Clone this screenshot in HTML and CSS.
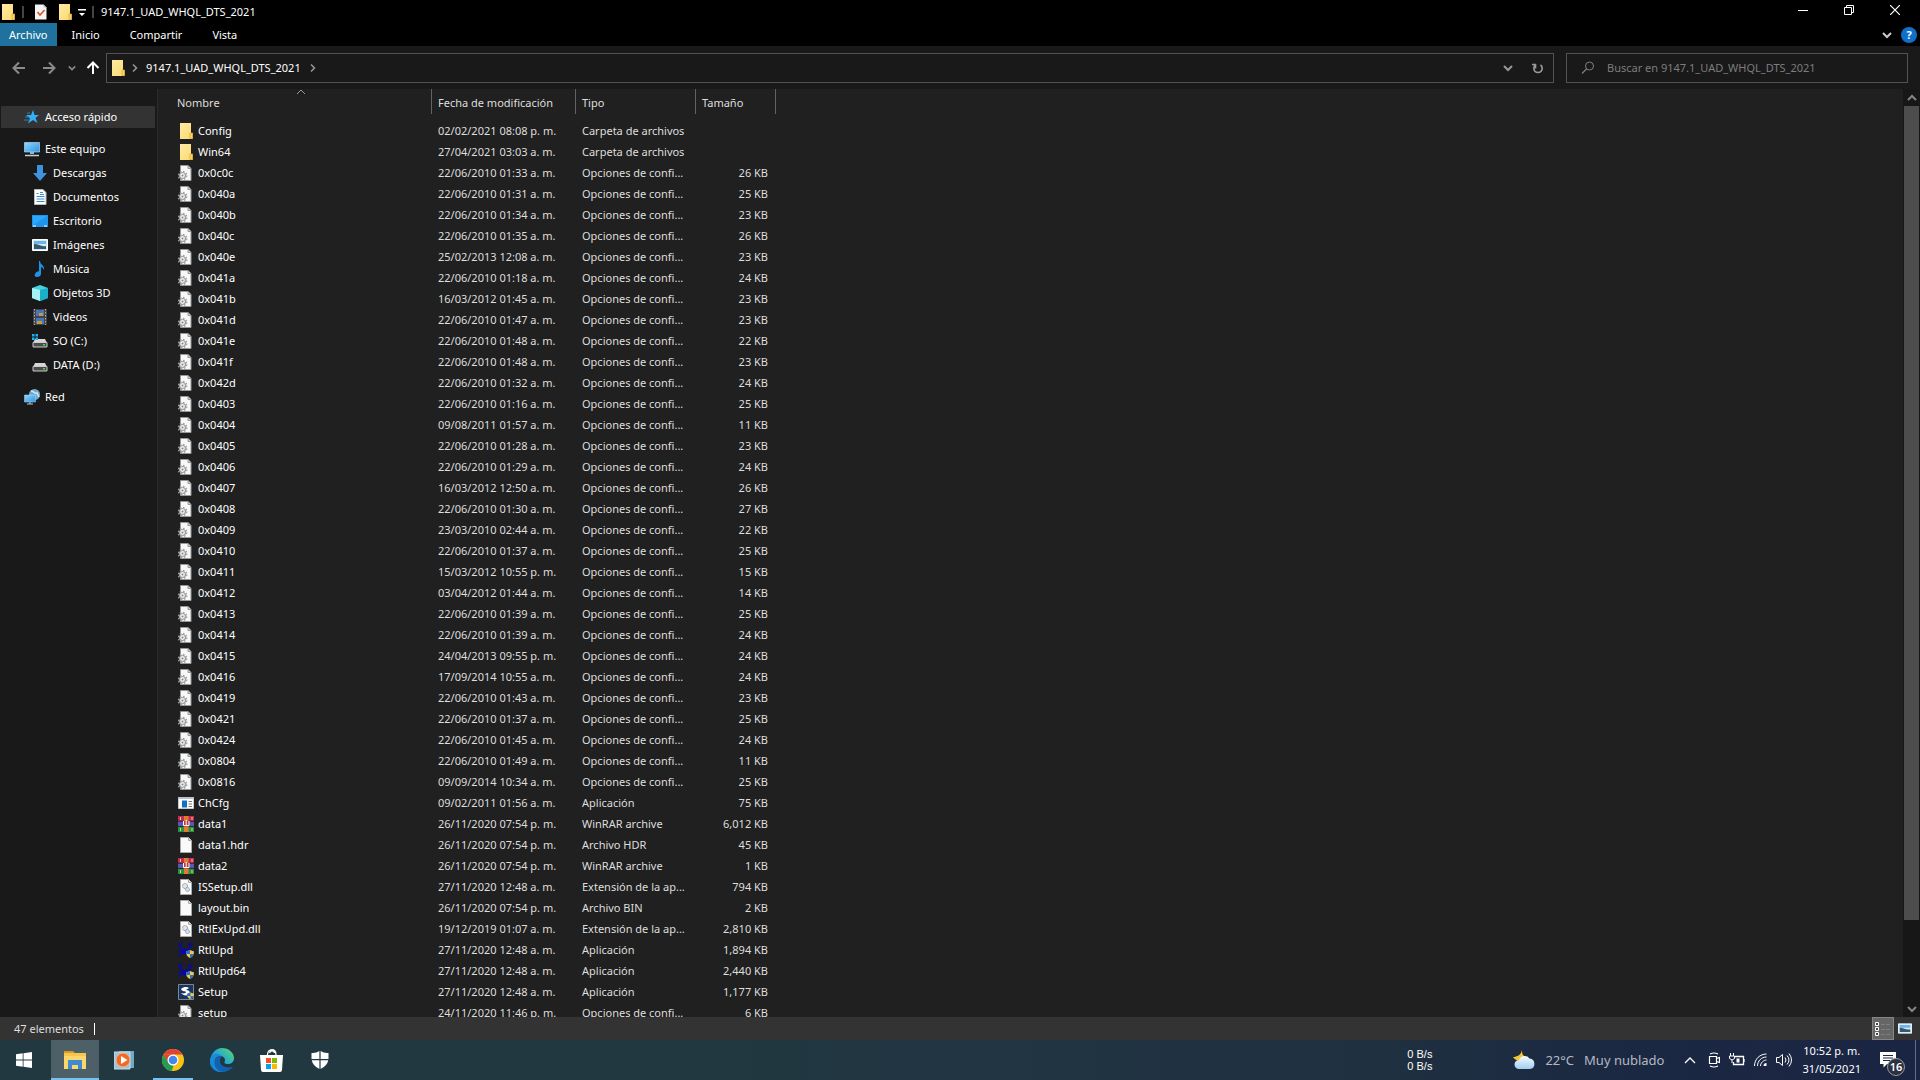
FILE: index.html
```html
<!DOCTYPE html>
<html lang="es">
<head>
<meta charset="utf-8">
<title>9147.1_UAD_WHQL_DTS_2021</title>
<link rel="stylesheet" href="styles.css">
</head>
<body>
<svg class="sprite" aria-hidden="true">
  <defs>
    <linearGradient id="g-edge" x1="0" y1="1" x2="1" y2="0"><stop offset="0" stop-color="#0c59a4"/><stop offset=".45" stop-color="#1b9de2"/><stop offset="1" stop-color="#5fdc6a"/></linearGradient>
    <linearGradient id="g-screen" x1="0" y1="0" x2="1" y2="1"><stop offset="0" stop-color="#8fd6ff"/><stop offset="1" stop-color="#2b95e0"/></linearGradient>
    <linearGradient id="g-folder" x1="0" y1="0" x2="1" y2="1"><stop offset="0" stop-color="#ffeba6"/><stop offset="1" stop-color="#fbd96b"/></linearGradient>
    <linearGradient id="g-cloud" x1="0" y1="0" x2="0" y2="1"><stop offset="0" stop-color="#f4fbff"/><stop offset="1" stop-color="#a3cdf0"/></linearGradient>
  </defs>
  <symbol id="folder" viewBox="0 0 16 16"><path d="M2 0h11v10h1.500v6H2z" fill="url(#g-folder)"/><path d="M12 15.500v-5.500h2.500v5.500z" fill="#f8d568" stroke="#d9ab3c" stroke-width=".8"/></symbol>
  <symbol id="ini" viewBox="1 0 16 16"><path d="M3.500.500H11L14 3.500v12H3.500z" fill="#f8f8f8" stroke="#999"/><path d="M11 .500v3h3" fill="#ccc" stroke="#999"/><circle cx="5.500" cy="10.500" r="3" fill="#f0f0f0" stroke="#9a9fa2" stroke-width="1.200"/><circle cx="5.500" cy="10.500" r="4.200" fill="none" stroke="#9a9fa2" stroke-width="1.400" stroke-dasharray="1.500 1.800"/><circle cx="5.500" cy="10.500" r="1" fill="#888"/></symbol>
  <symbol id="file" viewBox="0 0 16 16"><path d="M2.500.500h8L13.500 3.500v12h-11z" fill="#fafafa" stroke="#aaa"/><path d="M10.500.500v3h3" fill="#ddd" stroke="#aaa"/></symbol>
  <symbol id="dll" viewBox="0 0 16 16"><use href="#file"/><circle cx="7" cy="7" r="2.500" fill="#e1e5e8" stroke="#7d8a93" stroke-dasharray="1.200 .6"/><circle cx="9.500" cy="10.500" r="2" fill="#d5e1eb" stroke="#7490a7" stroke-dasharray="1.200 .6"/></symbol>
  <symbol id="app" viewBox="0 0 16 16"><path d="M.500 2.500h15v11H.500z" fill="#fff" stroke="#c6cbd0"/><path d="M0 2h16v2H0z" fill="#b9c2c9"/><path d="M4 5.500h5v7H4z" fill="#1271c4"/><path d="M10.500 6.500H14m-3.500 2.500H14m-3.500 2.500H14" stroke="#777"/></symbol>
  <symbol id="rar" viewBox="0 0 16 16"><path d="M0 0h16v5H0z" fill="#c8285a"/><path d="M0 5.500h16v4.500H0z" fill="#5a58b4"/><path d="M0 10.500h16V16H0z" fill="#259147"/><path d="M0 5.200h16M0 10.400h16" stroke="#2a2434" stroke-width=".8"/><path d="M2.500 1v3M2.500 12v3M14 1v3M14 12v3" stroke="#f0d060"/><path d="M6 0h4.500v16H6z" fill="#e07c2c"/><path d="M5 5h6.500v5.500H5z" fill="#b03c44"/><path d="M5.500 5v4.500h5.500V5M8.200 4v5" fill="none" stroke="#fff"/></symbol>
  <symbol id="shield" viewBox="0 0 8 8"><path d="M4 0l4 1.500C8 5 6.500 7 4 8 1.500 7 0 5 0 1.500z" fill="#f1c94b"/><path d="M4 0L0 1.500 .3 4H4zM4 4h3.700C7 6 6 7.200 4 8z" fill="#2b6fc6"/></symbol>
  <symbol id="crab" viewBox="0 0 16 16"><path d="M1 1l1 4 3 3M14 0l-1 4-3 4M4 0l-1 4M11 1v3M0 9l4 1-3 4M15 8l-4 2" stroke="#0a0a9c" stroke-width="1.600" fill="none"/><path d="M3 8c2-2 7-2 9 0l-1 4H4z" fill="#0808a8"/><use href="#shield" x="8" y="8" width="8" height="8"/></symbol>
  <symbol id="setup" viewBox="0 0 16 16"><path d="M.500.500h15v15H.500z" fill="#1a3560" stroke="#77879b"/><path d="M3 5c3-3 7-2 8-1L8 6c4 0 5 3 2 5-3 1-5 0-7-2 3 1 5 0 5-1S4 8 3 5z" fill="#fff"/><use href="#shield" x="9" y="8" width="7" height="8"/></symbol>
  <symbol id="drive" viewBox="0 0 16 16"><path d="M3 6h10l2 4H1z" fill="#d6d6d6"/><path d="M1 9.500h14V14H1z" fill="#4c4c4c" stroke="#c9c9c9"/><path d="M11 11h2v1.500h-2z" fill="#37e04e"/></symbol>
  <symbol id="picture" viewBox="0 0 16 12"><path d="M.500.500h15v11H.500z" fill="#d4ebfa" stroke="#fff"/><path d="M2 2h12v3H2z" fill="#6db5e9"/><path d="M2 5c5 0 7 3 12 2v3H2z" fill="#33596c"/></symbol>
  <symbol id="down" viewBox="0 0 10 10"><path d="M1 3l4 4 4-4" fill="none" stroke="currentColor" stroke-width="2"/></symbol>
  <symbol id="right" viewBox="0 0 6 10"><path d="M1 1.500L4.500 5 1 8.500" fill="none" stroke="currentColor" stroke-width="1.500"/></symbol>
  <symbol id="arrow" viewBox="0 0 14 14"><path d="M13 7H1.500M7 1.500L1.500 7 7 12.500" fill="none" stroke="currentColor" stroke-width="2"/></symbol>
</svg>

<header class="titlebar">
  <svg class="i16"><use href="#folder"/></svg>
  <span class="bar"></span>
  <button class="qa" aria-label="Propiedades"><svg class="i16" viewBox="0 0 16 16"><path d="M2 .500h8.500L13.500 3.500v12H2z" fill="#f4f4f4"/><path d="M10.500.500v3h3" fill="#bbb"/><path d="M4.500 8l2.500 3 4.500-5" fill="none" stroke="#d9552a" stroke-width="1.600"/></svg></button>
  <button class="qa" aria-label="Nueva carpeta"><svg class="i16"><use href="#folder"/></svg></button>
  <button class="qa more" aria-label="Personalizar barra"><svg width="8" height="8" viewBox="0 0 8 8"><path d="M0 0h8v1.500H0zM1 4h6L4 7z" fill="#fff"/></svg></button>
  <span class="bar"></span>
  <h1 class="title">9147.1_UAD_WHQL_DTS_2021</h1>
  <div class="winctl">
    <button aria-label="Minimizar"><svg width="10" height="10"><path d="M0 5.500h10" stroke="#fff"/></svg></button>
    <button aria-label="Restaurar"><svg width="10" height="10"><path d="M.500 2.500h7v7h-7zM2.500 2V.500h7v7H8" fill="none" stroke="#fff"/></svg></button>
    <button aria-label="Cerrar"><svg width="10" height="10"><path d="M0 0l10 10M10 0L0 10" stroke="#fff" stroke-width="1.200"/></svg></button>
  </div>
</header>

<nav class="tabs">
  <button class="tab active">Archivo</button><button class="tab">Inicio</button><button class="tab">Compartir</button><button class="tab">Vista</button>
  <div class="ribbon-end">
    <button aria-label="Expandir cinta"><svg class="i10"><use href="#down"/></svg></button>
    <button class="help" aria-label="Ayuda">?</button>
  </div>
</nav>

<div class="address-row">
  <div class="history">
    <button class="dim" aria-label="Atrás"><svg class="i14"><use href="#arrow"/></svg></button>
    <button class="dim fwd" aria-label="Adelante"><svg class="i14 flip"><use href="#arrow"/></svg></button>
    <button class="dim recent" aria-label="Recientes"><svg class="i8"><use href="#down"/></svg></button>
    <button aria-label="Subir"><svg class="i14 up"><use href="#arrow"/></svg></button>
  </div>
  <div class="address">
    <svg class="i16"><use href="#folder"/></svg>
    <svg class="crumb"><use href="#right"/></svg>
    <a class="path" href="#">9147.1_UAD_WHQL_DTS_2021</a>
    <svg class="crumb"><use href="#right"/></svg>
    <button class="drop" aria-label="Ubicaciones anteriores"><svg class="i10"><use href="#down"/></svg></button>
    <button class="refresh" aria-label="Actualizar"><svg width="12" height="12" viewBox="0 0 12 12"><path d="M8.500 2.500a4.200 4.200 0 1 1-5 0M3.500 6V2H0" transform="translate(0 .5)" fill="none" stroke="currentColor" stroke-width="1.600"/></svg></button>
  </div>
  <label class="search">
    <svg width="14" height="14" viewBox="0 0 14 14"><circle cx="8.500" cy="5" r="4" fill="none" stroke="currentColor"/><path d="M5.500 8L1 12.500" stroke="currentColor" stroke-width="1.300"/></svg>
    <input type="text" aria-label="Buscar" placeholder="Buscar en 9147.1_UAD_WHQL_DTS_2021">
  </label>
</div>

<main class="body">
  <nav class="side">
    <a class="root sel" href="#"><svg class="i16" viewBox="0 0 16 16"><path d="M9 1l1.500 5H15l-3.500 3 2 5L9 11l-5 3.500 2-5L2 6h5z" fill="#35aef5"/><path d="M1 8h4M0 11h5M3 4h3" stroke="#2583bd"/></svg>Acceso rápido</a>
    <a class="root gap" href="#"><svg class="i16" viewBox="0 0 16 16"><path d="M.500 1.500h15v9.500H.500z" fill="url(#g-screen)" stroke="#bfe6ff" stroke-width=".6"/><path d="M6 11h4v2H6z" fill="#9fb3bf"/><path d="M1 14.500h14" stroke="#c5d0d8" stroke-width="1.500"/></svg>Este equipo</a>
    <a href="#"><svg class="i16" viewBox="0 0 16 16"><path d="M5 0h6v8h4l-7 8-7-8h4z" fill="#3e93e0"/></svg>Descargas</a>
    <a href="#"><svg class="i16" viewBox="0 0 16 16"><path d="M2.500.500h8.500l3 3v12H2.500z" fill="#fff" stroke="#bbb"/><path d="M4.500 4.500h2m-2 3h8m-8 2.500h8m-8 2.500h8M8 3.500h3M8 5.500h4" stroke="#3b8bd0"/></svg>Documentos</a>
    <a href="#"><svg class="i16" viewBox="0 0 16 16"><path d="M0 2h16v12H0z" fill="#1e95ea"/><path d="M1 3h14L1 12z" fill="#2ba8fb"/><path d="M1 13h3m8 0h3" stroke="#fff"/></svg>Escritorio</a>
    <a href="#"><svg class="i16" viewBox="0 0 16 12"><use href="#picture"/></svg>Imágenes</a>
    <a href="#"><svg class="i16" viewBox="0 0 16 16"><path d="M8 0c0 4 5 4 4 9-1-2-2-3-3-3v7c0 2-2 3-4 3s-3-1-2-3 3-3 4-2.500V0z" fill="#1e93e8"/></svg>Música</a>
    <a href="#"><svg class="i16" viewBox="0 0 16 16"><path d="M0 3l8-3 8 3v10l-8 3-8-3z" fill="#43d3df"/><path d="M0 3l8 2v11l-8-3z" fill="#a6f1f4"/><path d="M8 5l8-2v10l-8 3z" fill="#1bb0c7"/></svg>Objetos 3D</a>
    <a href="#"><svg class="i16" viewBox="0 0 16 16"><path d="M1 0h14v16H1z" fill="#444"/><path d="M2.500 0v16m11-16v16" stroke="#aaa" stroke-dasharray="1.500 1.500"/><path d="M4 1h8v6H4zM4 9h8v6H4z" fill="#4676c3"/><path d="M7 4h4v3H7zM5 12h5v3H5z" fill="#c69b35"/></svg>Videos</a>
    <a href="#"><svg class="i16" viewBox="0 0 16 16"><use href="#drive"/><path d="M0 1h2.500v2.500H0zM3.500 1H6v2.500H3.500zM0 4.500h2.500V7H0zM3.500 4.500H6V7H3.500z" fill="#20b3ef"/></svg>SO (C:)</a>
    <a href="#"><svg class="i16"><use href="#drive"/></svg>DATA (D:)</a>
    <a class="root gap" href="#"><svg class="i16" viewBox="0 0 16 16"><circle cx="10.500" cy="5.500" r="5.500" fill="#73a9c9"/><path d="M7 2c3 0 3 3 6 2l2 4" stroke="#d2ebf7" fill="none" stroke-width="1.500"/><path d="M.500 6h11v7H.500z" fill="url(#g-screen)" stroke="#a6dcff" stroke-width=".5"/><path d="M3 15h6M6 13v2" stroke="#bccad3"/></svg>Red</a>
  </nav>
  <div class="files">
    <table>
      <colgroup><col class="c-name"><col class="c-date"><col class="c-type"><col class="c-size"></colgroup>
      <thead><tr><th class="sorted">Nombre<svg width="10" height="6"><path d="M1 5l4-4 4 4" fill="none" stroke="#999"/></svg></th><th>Fecha de modificación</th><th>Tipo</th><th>Tamaño</th></tr></thead>
      <tbody>
        <tr><td><svg><use href="#folder"/></svg>Config</td><td>02/02/2021 08:08 p. m.</td><td>Carpeta de archivos</td><td></td></tr>
        <tr><td><svg><use href="#folder"/></svg>Win64</td><td>27/04/2021 03:03 a. m.</td><td>Carpeta de archivos</td><td></td></tr>
        <tr><td><svg><use href="#ini"/></svg>0x0c0c</td><td>22/06/2010 01:33 a. m.</td><td>Opciones de confi...</td><td>26 KB</td></tr>
        <tr><td><svg><use href="#ini"/></svg>0x040a</td><td>22/06/2010 01:31 a. m.</td><td>Opciones de confi...</td><td>25 KB</td></tr>
        <tr><td><svg><use href="#ini"/></svg>0x040b</td><td>22/06/2010 01:34 a. m.</td><td>Opciones de confi...</td><td>23 KB</td></tr>
        <tr><td><svg><use href="#ini"/></svg>0x040c</td><td>22/06/2010 01:35 a. m.</td><td>Opciones de confi...</td><td>26 KB</td></tr>
        <tr><td><svg><use href="#ini"/></svg>0x040e</td><td>25/02/2013 12:08 a. m.</td><td>Opciones de confi...</td><td>23 KB</td></tr>
        <tr><td><svg><use href="#ini"/></svg>0x041a</td><td>22/06/2010 01:18 a. m.</td><td>Opciones de confi...</td><td>24 KB</td></tr>
        <tr><td><svg><use href="#ini"/></svg>0x041b</td><td>16/03/2012 01:45 a. m.</td><td>Opciones de confi...</td><td>23 KB</td></tr>
        <tr><td><svg><use href="#ini"/></svg>0x041d</td><td>22/06/2010 01:47 a. m.</td><td>Opciones de confi...</td><td>23 KB</td></tr>
        <tr><td><svg><use href="#ini"/></svg>0x041e</td><td>22/06/2010 01:48 a. m.</td><td>Opciones de confi...</td><td>22 KB</td></tr>
        <tr><td><svg><use href="#ini"/></svg>0x041f</td><td>22/06/2010 01:48 a. m.</td><td>Opciones de confi...</td><td>23 KB</td></tr>
        <tr><td><svg><use href="#ini"/></svg>0x042d</td><td>22/06/2010 01:32 a. m.</td><td>Opciones de confi...</td><td>24 KB</td></tr>
        <tr><td><svg><use href="#ini"/></svg>0x0403</td><td>22/06/2010 01:16 a. m.</td><td>Opciones de confi...</td><td>25 KB</td></tr>
        <tr><td><svg><use href="#ini"/></svg>0x0404</td><td>09/08/2011 01:57 a. m.</td><td>Opciones de confi...</td><td>11 KB</td></tr>
        <tr><td><svg><use href="#ini"/></svg>0x0405</td><td>22/06/2010 01:28 a. m.</td><td>Opciones de confi...</td><td>23 KB</td></tr>
        <tr><td><svg><use href="#ini"/></svg>0x0406</td><td>22/06/2010 01:29 a. m.</td><td>Opciones de confi...</td><td>24 KB</td></tr>
        <tr><td><svg><use href="#ini"/></svg>0x0407</td><td>16/03/2012 12:50 a. m.</td><td>Opciones de confi...</td><td>26 KB</td></tr>
        <tr><td><svg><use href="#ini"/></svg>0x0408</td><td>22/06/2010 01:30 a. m.</td><td>Opciones de confi...</td><td>27 KB</td></tr>
        <tr><td><svg><use href="#ini"/></svg>0x0409</td><td>23/03/2010 02:44 a. m.</td><td>Opciones de confi...</td><td>22 KB</td></tr>
        <tr><td><svg><use href="#ini"/></svg>0x0410</td><td>22/06/2010 01:37 a. m.</td><td>Opciones de confi...</td><td>25 KB</td></tr>
        <tr><td><svg><use href="#ini"/></svg>0x0411</td><td>15/03/2012 10:55 p. m.</td><td>Opciones de confi...</td><td>15 KB</td></tr>
        <tr><td><svg><use href="#ini"/></svg>0x0412</td><td>03/04/2012 01:44 a. m.</td><td>Opciones de confi...</td><td>14 KB</td></tr>
        <tr><td><svg><use href="#ini"/></svg>0x0413</td><td>22/06/2010 01:39 a. m.</td><td>Opciones de confi...</td><td>25 KB</td></tr>
        <tr><td><svg><use href="#ini"/></svg>0x0414</td><td>22/06/2010 01:39 a. m.</td><td>Opciones de confi...</td><td>24 KB</td></tr>
        <tr><td><svg><use href="#ini"/></svg>0x0415</td><td>24/04/2013 09:55 p. m.</td><td>Opciones de confi...</td><td>24 KB</td></tr>
        <tr><td><svg><use href="#ini"/></svg>0x0416</td><td>17/09/2014 10:55 a. m.</td><td>Opciones de confi...</td><td>24 KB</td></tr>
        <tr><td><svg><use href="#ini"/></svg>0x0419</td><td>22/06/2010 01:43 a. m.</td><td>Opciones de confi...</td><td>23 KB</td></tr>
        <tr><td><svg><use href="#ini"/></svg>0x0421</td><td>22/06/2010 01:37 a. m.</td><td>Opciones de confi...</td><td>25 KB</td></tr>
        <tr><td><svg><use href="#ini"/></svg>0x0424</td><td>22/06/2010 01:45 a. m.</td><td>Opciones de confi...</td><td>24 KB</td></tr>
        <tr><td><svg><use href="#ini"/></svg>0x0804</td><td>22/06/2010 01:49 a. m.</td><td>Opciones de confi...</td><td>11 KB</td></tr>
        <tr><td><svg><use href="#ini"/></svg>0x0816</td><td>09/09/2014 10:34 a. m.</td><td>Opciones de confi...</td><td>25 KB</td></tr>
        <tr><td><svg><use href="#app"/></svg>ChCfg</td><td>09/02/2011 01:56 a. m.</td><td>Aplicación</td><td>75 KB</td></tr>
        <tr><td><svg><use href="#rar"/></svg>data1</td><td>26/11/2020 07:54 p. m.</td><td>WinRAR archive</td><td>6,012 KB</td></tr>
        <tr><td><svg><use href="#file"/></svg>data1.hdr</td><td>26/11/2020 07:54 p. m.</td><td>Archivo HDR</td><td>45 KB</td></tr>
        <tr><td><svg><use href="#rar"/></svg>data2</td><td>26/11/2020 07:54 p. m.</td><td>WinRAR archive</td><td>1 KB</td></tr>
        <tr><td><svg><use href="#dll"/></svg>ISSetup.dll</td><td>27/11/2020 12:48 a. m.</td><td>Extensión de la ap...</td><td>794 KB</td></tr>
        <tr><td><svg><use href="#file"/></svg>layout.bin</td><td>26/11/2020 07:54 p. m.</td><td>Archivo BIN</td><td>2 KB</td></tr>
        <tr><td><svg><use href="#dll"/></svg>RtlExUpd.dll</td><td>19/12/2019 01:07 a. m.</td><td>Extensión de la ap...</td><td>2,810 KB</td></tr>
        <tr><td><svg><use href="#crab"/></svg>RtlUpd</td><td>27/11/2020 12:48 a. m.</td><td>Aplicación</td><td>1,894 KB</td></tr>
        <tr><td><svg><use href="#crab"/></svg>RtlUpd64</td><td>27/11/2020 12:48 a. m.</td><td>Aplicación</td><td>2,440 KB</td></tr>
        <tr><td><svg><use href="#setup"/></svg>Setup</td><td>27/11/2020 12:48 a. m.</td><td>Aplicación</td><td>1,177 KB</td></tr>
        <tr><td><svg><use href="#ini"/></svg>setup</td><td>24/11/2020 11:46 p. m.</td><td>Opciones de confi...</td><td>6 KB</td></tr>
      </tbody>
    </table>
  </div>
  <div class="scroll">
    <button aria-label="Subir lista"><svg class="i10 turn"><use href="#down"/></svg></button>
    <div class="track"><div class="thumb"></div></div>
    <button aria-label="Bajar lista"><svg class="i10"><use href="#down"/></svg></button>
  </div>
</main>

<div class="status">
  <span class="count">47 elementos</span>
  <button class="view on" aria-label="Detalles"><svg width="16" height="14" viewBox="0 0 16 14"><path d="M.500.500h3v3h-3zM.500 5.500h3v3h-3zM.500 10.500h3v3h-3z" fill="#444" stroke="#fff"/><path d="M6 2.500h10M6 7.500h10M6 12.500h10" stroke="#7c807c" stroke-dasharray="4 1"/></svg></button>
  <button class="view" aria-label="Iconos grandes"><svg width="14" height="11" viewBox="0 0 16 12"><use href="#picture"/></svg></button>
</div>

<footer class="taskbar">
  <div class="apps">
    <button class="start" aria-label="Inicio"><svg width="16" height="16" viewBox="0 0 16 16"><path d="M0 2.300l6.700-1v6.200H0zM7.500 1.200L16 0v7.500H7.500zM0 8.400h6.700v6.300L0 13.800zM7.500 8.400H16V16l-8.500-1.200z" fill="#fff"/></svg></button>
    <button class="current" aria-label="Explorador"><svg width="22" height="18" viewBox="0 0 22 18"><path d="M0 0h9l2 2H0z" fill="#d89b1e"/><path d="M0 2h22v16H0z" fill="#fbd66c"/><path d="M0 2h22v3H0z" fill="#f5c64f"/><path d="M4 9h14v9h-4v-4H8v4H4z" fill="#3b8cd0"/></svg></button>
    <button aria-label="Reproductor multimedia"><svg width="20" height="20" viewBox="0 0 20 20"><path d="M5 1h15v17H5z" fill="#6fa9c7"/><path d="M0 2h16v17H0z" fill="#9cc6de" stroke="#c4dfed"/><circle cx="9" cy="10" r="7" fill="#ed6b25" stroke="#f9b98c"/><path d="M7 6l6.500 4L7 14z" fill="#fff"/></svg></button>
    <button class="running" aria-label="Chrome"><svg width="22" height="22" viewBox="0 0 22 22"><circle cx="11" cy="11" r="11" fill="#fbc116"/><path d="M1.500 5.500A11 11 0 0 1 20.500 5.500H11z" fill="#e04235"/><path d="M1.500 5.500L7 14l4.500 3-2 5A11 11 0 0 1 1.500 5.500z" fill="#259d50"/><path d="M1.500 5.500L6 13l5-7.500z" fill="#e04235"/><circle cx="11" cy="11" r="5.500" fill="#fff"/><circle cx="11" cy="11" r="4.300" fill="#4585ee"/></svg></button>
    <button aria-label="Edge"><svg width="24" height="24" viewBox="0 0 24 24"><path d="M0 12C1 5 6 0 12 0c7 0 12 5 12 10 0 4-3 6-6 6-3 0-4-1-3.500-2C16 11 14 8 10 8c-5 0-7 5-4 10 2 4 7 6 10 5-8 4-17-2-16-11z" fill="url(#g-edge)"/><path d="M10 8c-8 1-8 13 1 15.500 5 1.500 10-2 12-5-5 2-13 1-13-6 0-2 1-3.500 2-4z" fill="#1262b1"/><path d="M0 12c1-6 8-8 12-4-6-1-9 4-7 10 1 3 4 5 6 5.700C4 23.500-.500 18 0 12z" fill="#198bd4"/></svg></button>
    <button aria-label="Microsoft Store"><svg width="23" height="23" viewBox="0 0 23 23"><path d="M7.500 6c0-7 8.500-7 8.500 0M9.500 4c1-3 4.500-3 5 0" fill="none" stroke="#fff" stroke-width="1.300"/><path d="M0 6h23l-1 15q-.200 2-2 2H3q-1.800 0-2-2z" fill="#fff"/><path d="M6 9h5v5H6z" fill="#f25022"/><path d="M12 9h5v5h-5z" fill="#7fba00"/><path d="M6 15h5v5H6z" fill="#00a4ef"/><path d="M12 15h5v5h-5z" fill="#ffb900"/></svg></button>
    <button aria-label="Seguridad de Windows"><svg width="18" height="18" viewBox="0 0 18 18"><path d="M8.400 0v8H.500V2Q5 2.500 8.400 0zM9.600 0Q13 2.500 17.500 2v6H9.600zM.700 9.200h7.700V18Q2 15 .700 9.200zM9.600 9.200h7.700Q16 15 9.600 18z" fill="#fff"/></svg></button>
  </div>
  <div class="tray">
    <div class="net"><span>0 B/s</span><span>0 B/s</span></div>
    <button class="weather"><svg width="22" height="20" viewBox="0 0 22 20"><path d="M9 0c0 4 1 6 5 8l-6 3C4 11 1 9 0 7c4 0 8-2 9-7z" fill="#f5c52e"/><path d="M6 19a4.500 4.500 0 0 1 0-9 6 6 0 0 1 10.500-1.500A5.300 5.300 0 0 1 17 19z" fill="url(#g-cloud)"/></svg><span>22°C</span><span>Muy nublado</span></button>
    <button class="chev" aria-label="Iconos ocultos"><svg width="12" height="7"><path d="M1 6l5-5 5 5" fill="none" stroke="#fff" stroke-width="1.300"/></svg></button>
    <svg width="12" height="16" viewBox="0 0 12 16"><path d="M1.500 4.500h7v7h-7zM8.500 6.500l3-1v5l-3-1M2 2q4-2 8 0M2 14q4 2 8 0" fill="none" stroke="#fff" stroke-width="1.200"/></svg>
    <svg width="16" height="14" viewBox="0 0 16 14"><path d="M6 3.500h8.500v8H4.500V9M15 6v3" fill="none" stroke="#fff" stroke-width="1.300"/><path d="M7.500 5.500h3v4h-3z" fill="#fff"/><path d="M1.500 0v3M4.500 0v3M.500 3h5v2.500L3 7 .500 5.500zM3 7v3" fill="none" stroke="#fff"/></svg>
    <svg width="13" height="14" viewBox="0 0 13 14"><path d="M.500 13C.500 6 6 1 12.500 1M3.500 13c0-5 4-9 9-9M6.500 13c0-3 3-6 6-6" fill="none" stroke="#fff"/><path d="M9.500 13a3 3 0 0 1 3-3v3z" fill="#fff"/></svg>
    <svg width="16" height="14" viewBox="0 0 16 14"><path d="M.500 4.500h2.500l3.500-3v11L3 9.500H.500z" fill="none" stroke="#fff"/><path d="M9 4.500q2 2.500 0 5M11 2.500q4 4.500 0 9M13 .500q5 6.500 0 13" fill="none" stroke="#fff"/></svg>
    <div class="clock"><span>10:52 p. m.</span><span>31/05/2021</span></div>
    <button class="notify" aria-label="Notificaciones"><svg width="16" height="16" viewBox="0 0 16 16"><path d="M0 0h16v12H7l-3.500 3.500V12H0z" fill="#fff"/><path d="M3 3.500h10M3 6h10M3 8.500h7" stroke="#1b2743" stroke-width="1.200"/></svg><span class="badge">16</span></button>
    <button class="desktop" aria-label="Mostrar escritorio"></button>
  </div>
</footer>
</body>
</html>
```
FILE: styles.css
```css
* { box-sizing: border-box; }
body {
  margin: 0;
  height: 100vh;
  display: flex;
  flex-direction: column;
  overflow: hidden;
  background: #191919;
  color: #fff;
  font: 11px/16px "Noto Sans", sans-serif;
}
button { border: 0; padding: 0; margin: 0; background: none; color: inherit; font: inherit; display: flex; align-items: center; justify-content: center; }
a { color: inherit; text-decoration: none; }
svg { display: block; flex: none; }
.sprite { position: absolute; width: 0; height: 0; }
.i16 { width: 16px; height: 16px; }
.i14 { width: 14px; height: 14px; }
.i10 { width: 10px; height: 10px; }
.i8 { width: 8px; height: 8px; }
.flip, .turn { transform: rotate(180deg); }
.up { transform: rotate(90deg); }

.titlebar { display: flex; align-items: center; height: 23px; background: #000; }
.bar { width: 2px; height: 12px; margin-left: 6px; background: #444; }
.qa { margin-left: 8px; }
.titlebar .bar + .qa { margin-left: 9px; }
.titlebar .more { margin: 2px 0 0 5px; }
.title { margin: 0 0 0 7px; font-size: 11px; font-weight: 400; }
.winctl { display: flex; align-self: flex-start; height: 20px; margin-left: auto; padding-right: 2px; }
.winctl button { width: 46px; }

.tabs { display: flex; height: 23px; background: #000; }
.tab { padding: 0 15px; }
.tab.active { padding: 0 9px; background: #1f729e; }
.ribbon-end { display: flex; align-items: center; gap: 9px; margin-left: auto; padding-right: 3px; color: #ccc; }
.help { width: 16px; height: 16px; border-radius: 8px; background: #0f6fc9; color: #fff; font-weight: 700; }

.address-row { display: flex; align-items: center; height: 43px; padding: 0 12px; }
.history { display: flex; align-items: center; width: 94px; }
.history .fwd { margin-left: 16px; }
.history .recent { margin: 0 10px 0 12px; }
.dim { color: #8b8b8b; }
.address { display: flex; align-items: center; flex: 1; height: 30px; padding-left: 3px; border: 1px solid #535353; }
.crumb { width: 6px; height: 10px; margin: 0 8px 0 6px; color: #999; }
.path + .crumb { margin-left: 9px; }
.drop, .refresh { color: #999; width: 30px; height: 28px; }
.drop { margin-left: auto; }
.search { display: flex; align-items: center; width: 342px; height: 30px; margin-left: 12px; padding-left: 14px; border: 1px solid #535353; color: #808080; }
.search input { flex: 1; margin-left: 12px; padding: 0; border: 0; outline: 0; background: none; font: inherit; color: #fff; }
.search input::placeholder { color: #7d7d7d; opacity: 1; }

.body { display: flex; flex: 1; min-height: 0; overflow: hidden; }
.side { width: 158px; padding: 17px 2px 0 1px; border-right: 1px solid #2b2b2b; }
.side a { display: flex; align-items: center; gap: 5px; height: 24px; padding-left: 31px; white-space: nowrap; }
.side .root { padding-left: 23px; }
.side .sel { height: 22px; background: #333; }
.side .gap { margin-top: 8px; }
.side .sel + .gap { margin-top: 9px; }

.files { flex: 1; overflow: hidden; background: #202020; }
table { border-collapse: separate; border-spacing: 0; table-layout: fixed; width: 618px; }
.c-name { width: 274px; }
.c-date { width: 144px; }
.c-type { width: 120px; }
.c-size { width: 80px; }
th { height: 25px; padding: 2px 0 0 6px; border-right: 1px solid #636363; color: #dedede; font-weight: 400; text-align: left; white-space: nowrap; }
th:first-child { padding-left: 19px; }
.sorted { position: relative; }
.sorted svg { position: absolute; left: 138px; top: 0; }
tbody::before { content: ""; display: block; height: 6px; }
td { height: 21px; padding: 0 6px; color: #dedede; white-space: nowrap; overflow: hidden; }
td:first-child { display: flex; align-items: center; gap: 4px; padding-left: 20px; color: #fff; }
td:last-child { padding-right: 8px; text-align: right; }
td svg { width: 16px; height: 16px; }

.scroll { display: flex; flex-direction: column; width: 17px; background: #171717; color: #858585; }
.scroll button { height: 17px; }
.track { flex: 1; padding: 0 1px; }
.thumb { height: 91%; background: #4d4d4d; }

.status { display: flex; align-items: center; height: 23px; padding-right: 4px; background: #333; color: #dedede; }
.count { margin-right: auto; padding: 0 10px 0 14px; line-height: 12px; border-right: 1px solid #fff; }
.view { width: 22px; height: 23px; }
.view.on { background: #666; border: 1px solid #858585; }

.taskbar { display: flex; justify-content: space-between; height: 40px; background: linear-gradient(90deg, #213840 0, #213840 38%, #213542 50%, #1f3040 72%, #1b2842 85%, #1a2543 100%); }
.apps { display: flex; gap: 1px; }
.apps button { width: 48px; height: 40px; }
.apps .start { width: 50px; padding-right: 2px; }
.apps .current { background: #4d6068; border-bottom: 2px solid #76c2f0; border-top: 2px solid #4d6068; }
.running { background: linear-gradient(#76c2f0, #76c2f0) 50% 100% / 40px 2px no-repeat; }
.tray { display: flex; align-items: center; }
.net { display: flex; flex-direction: column; margin-right: 81px; font: 11px/12px "Liberation Sans", sans-serif; }
.weather { gap: 10px; margin-right: 20px; color: #b4b9c4; font-size: 13px; }
.chev { margin-right: 12px; }
.tray > svg { margin-right: 9px; }
.clock { display: flex; flex-direction: column; align-items: center; margin-left: 1px; line-height: 18px; }
.notify { position: relative; width: 17px; height: 40px; margin-left: 18px; }
.badge { position: absolute; left: 8px; top: 18px; width: 18px; height: 18px; border: 1px solid #999; border-radius: 9px; background: #2b3140; font-size: 11px; line-height: 16px; font-weight: 600; }
.desktop { width: 5px; height: 40px; margin-left: 19px; border-left: 1px solid #66708a; }
```
